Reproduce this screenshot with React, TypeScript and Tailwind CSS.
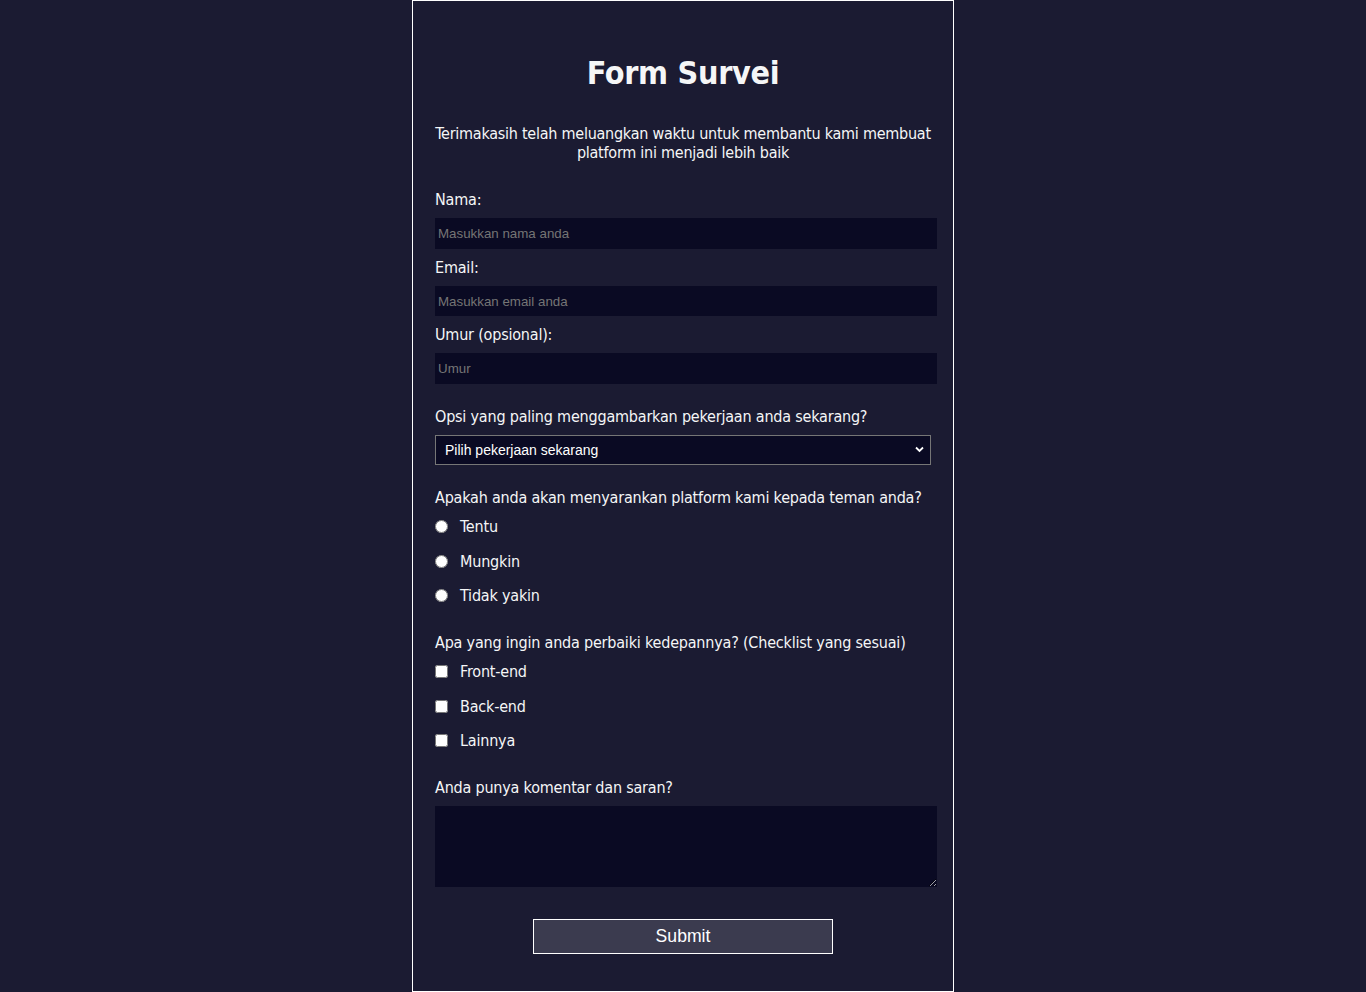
import React from "react";

const body = "font-['DejaVu_Sans_Condensed','DejaVu_Sans',sans-serif] font-stretch-condensed tracking-[-0.2px]";
const field =
  "block w-[502px] bg-[#0a0a23] pl-[3px] font-['Liberation_Sans',Arial,sans-serif] font-stretch-normal text-[13.33px] tracking-normal text-white outline-none placeholder:text-[#757575]";

function Choice({ type, name, label }: { type: "radio" | "checkbox"; name: string; label: string }) {
  return (
    <label className="flex h-[19px] items-center leading-[19px]">
      <input type={type} name={name} className="m-0 mr-[12px] h-[13px] w-[13px] shrink-0" />
      <span>{label}</span>
    </label>
  );
}

export default function App() {
  return (
    <div className={`min-h-screen bg-[#1b1b32] text-[16px] text-[#f5f6f7] ${body}`}>
      <div className="mx-auto w-[542px] border border-white px-[22px] pt-[53px] pb-[37px]">
        <h1 className="text-center text-[32px] font-bold leading-[38px] tracking-[-0.3px]">Form Survei</h1>
        <p className="-mx-[6px] mt-[32px] text-center leading-[19px] tracking-[-0.25px]">
          Terimakasih telah meluangkan waktu untuk membantu kami membuat platform ini menjadi lebih baik
        </p>

        <form className="mt-[28px]" onSubmit={(e) => e.preventDefault()}>
          <label className="block leading-[19px]">Nama:</label>
          <input type="text" placeholder="Masukkan nama anda" className={`mt-[9px] h-[31px] ${field}`} />
          <label className="mt-[9px] block leading-[19px]">Email:</label>
          <input type="email" placeholder="Masukkan email anda" className={`mt-[9px] h-[30px] ${field}`} />
          <label className="mt-[9px] block leading-[19px]">Umur (opsional):</label>
          <input type="number" placeholder="Umur" className={`mt-[9px] h-[31px] ${field}`} />

          <label className="mt-[23px] block leading-[19px]">Opsi yang paling menggambarkan pekerjaan anda sekarang?</label>
          <div className="relative mt-[9px]">
            <select className="block h-[30px] w-full appearance-none border border-[#767676] bg-[#0a0a23] pl-[9px] font-['Liberation_Sans',Arial,sans-serif] font-stretch-normal text-[14px] tracking-normal text-white outline-none">
              <option>Pilih pekerjaan sekarang</option>
              <option>Pelajar</option>
              <option>Pekerja penuh waktu</option>
              <option>Lainnya</option>
            </select>
            <svg
              aria-hidden="true"
              className="pointer-events-none absolute right-[7px] top-[11px]"
              width="9"
              height="7"
              viewBox="0 0 9 7"
              fill="none"
            >
              <path d="M1 1.5l3.5 3.5L8 1.5" stroke="#ffffff" strokeWidth="1.8" />
            </svg>
          </div>

          <p className="mt-[23px] leading-[19px]">Apakah anda akan menyarankan platform kami kepada teman anda?</p>
          <div className="mt-[10px] flex flex-col gap-[15.5px]">
            <Choice type="radio" name="saran" label="Tentu" />
            <Choice type="radio" name="saran" label="Mungkin" />
            <Choice type="radio" name="saran" label="Tidak yakin" />
          </div>

          <p className="mt-[28px] leading-[19px]">Apa yang ingin anda perbaiki kedepannya? (Checklist yang sesuai)</p>
          <div className="mt-[10px] flex flex-col gap-[15.5px]">
            <Choice type="checkbox" name="perbaiki" label="Front-end" />
            <Choice type="checkbox" name="perbaiki" label="Back-end" />
            <Choice type="checkbox" name="perbaiki" label="Lainnya" />
          </div>

          <label className="mt-[28px] block leading-[19px]">Anda punya komentar dan saran?</label>
          <textarea className="mt-[9px] block h-[81px] w-[502px] bg-[#0a0a23] p-[3px] text-white outline-none" />

          <button
            type="submit"
            className="mx-auto mt-[32px] block h-[35px] w-[300px] border border-white bg-[#3b3b4f] font-['Liberation_Sans',Arial,sans-serif] font-stretch-normal text-[17.6px] tracking-normal text-white"
          >
            Submit
          </button>
        </form>
      </div>
    </div>
  );
}
